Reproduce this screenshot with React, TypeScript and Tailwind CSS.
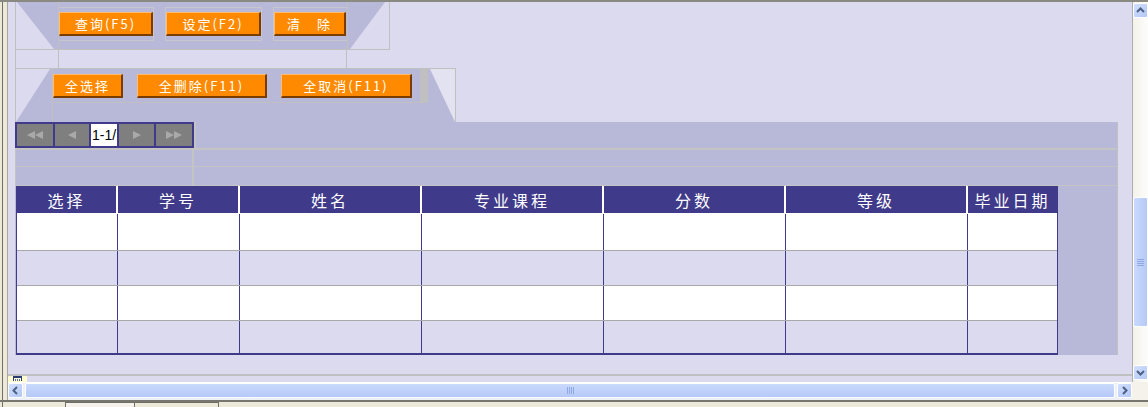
import React from 'react'

const heads = ['选择', '学号', '姓名', '专业课程', '分数', '等级', '毕业日期']
const colW = ['w-[101px]', 'w-[122px]', 'w-[182px]', 'w-[182px]', 'w-[182px]', 'w-[182px]', 'w-[89px]']
const rows = [
  'h-[36px] bg-white',
  'h-[35px] border-t border-[#a8a8a8] bg-[#dbdaee]',
  'h-[35px] border-t border-[#a8a8a8] bg-white',
  'h-[33px] border-t border-[#a8a8a8] bg-[#dbdaee]',
]

function OrangeBtn({ label, w }: { label: string; w: string }) {
  return (
    <div
      className={`${w} flex h-[24px] shrink-0 items-center justify-center border-t border-l border-t-[#ffbb70] border-l-[#ffbb70] border-r-2 border-b-2 border-r-[#7a3c00] border-b-[#7a3c00] bg-[#ff8a00] text-[13px] leading-none tracking-[2px] text-white`}
    >
      {label}
    </div>
  )
}

function PagerBtn({ w, d }: { w: string; d: string }) {
  return (
    <div className={`${w} flex h-full items-center justify-center bg-[#7f7f7f]`}>
      <svg width="18" height="8" viewBox="0 0 18 8">
        <path d={d} fill="#a9a9a9" />
      </svg>
    </div>
  )
}

function ScrollBtn({ d }: { d: string }) {
  return (
    <div className="flex h-[15px] w-[15px] shrink-0 items-center justify-center rounded-[2px] border border-white bg-gradient-to-br from-[#d3e0fe] to-[#b3c7f5]">
      <svg width="13" height="13" viewBox="0 0 13 13">
        <path d={d} fill="none" stroke="#4d6185" strokeWidth="2" />
      </svg>
    </div>
  )
}

function LeftEdge() {
  return (
    <div className="flex w-[8px] shrink-0">
      <div className="w-[2px] bg-[#ece9d8]" />
      <div className="w-px bg-[#6f6f68]" />
      <div className="w-[4px] bg-[#ece9d8]" />
      <div className="w-px bg-[#a9a8a0]" />
    </div>
  )
}

export default function App() {
  return (
    <div className="flex h-[407px] w-[1148px] flex-col overflow-hidden bg-[#ece9d8] font-['Noto_Sans_CJK_SC','Noto_Sans',sans-serif]">
      <div className="h-[2px] shrink-0 bg-[#8a8a82]" />

      <div className="flex h-[380px] shrink-0">
        <LeftEdge />

        {/* page body */}
        <div className="flex w-[1124px] flex-col bg-[#dbdaee] pl-[7px]">
          {/* query buttons */}
          <div className="flex w-[375px] flex-col">
            <div className="flex h-[48px] border-b border-[#c0c0c0]">
              <div className="w-[43px] border-l border-[#c0c0c0]">
                <svg className="block h-full w-full" viewBox="0 0 42 47" preserveAspectRatio="none">
                  <polygon points="1,0 42,0 42,47 38,47" fill="#b8b8d8" />
                </svg>
              </div>
              <div className="flex w-[289px] items-start gap-[11px] border-l border-[#c0c0c0] bg-[#b8b8d8] pt-[5px]">
                <div className="flex h-[34px] w-[95px] items-center justify-start border border-l-0 border-[#c6c6cc]">
                  <OrangeBtn label="查询(F5)" w="w-[94px]" />
                </div>
                <div className="flex h-[34px] w-[97px] items-center justify-center border border-[#c6c6cc]">
                  <OrangeBtn label="设定(F2)" w="w-[95px]" />
                </div>
                <div className="flex h-[34px] w-[74px] items-center justify-start border border-r-0 border-[#c6c6cc]">
                  <OrangeBtn label="清　除" w="w-[72px]" />
                </div>
              </div>
              <div className="w-[43px] border-x border-[#c0c0c0]">
                <svg className="block h-full w-full" viewBox="0 0 41 47" preserveAspectRatio="none">
                  <polygon points="0,0 37,0 2,47 0,47" fill="#b8b8d8" />
                </svg>
              </div>
            </div>
            <div className="flex h-[18px]">
              <div className="w-[43px] border-l border-[#c0c0c0]" />
              <div className="w-[289px] border-x border-[#c0c0c0]" />
            </div>
          </div>

          {/* select buttons */}
          <div className="flex h-[54px] w-[441px] border-t border-[#c0c0c0]">
            <div className="w-[37px] border-l border-[#c0c0c0]">
              <svg className="block h-full w-full" viewBox="0 0 36 53" preserveAspectRatio="none">
                <polygon points="34,0 36,0 36,53 0,53" fill="#b8b8d8" />
              </svg>
            </div>
            <div className="flex w-[376px] flex-col border-l border-[#c0c0c0] bg-[#b8b8d8]">
              <div className="flex h-[34px] border-b border-[#c0c0c0]">
                <div className="flex gap-[14px] pt-[5px]">
                  <OrangeBtn label="全选择" w="w-[70px]" />
                  <OrangeBtn label="全删除(F11)" w="w-[130px]" />
                  <OrangeBtn label="全取消(F11)" w="w-[131px]" />
                </div>
                <div className="ml-auto w-[8px] bg-[#c0c0c0]" />
              </div>
            </div>
            <div className="w-[28px] border-r border-[#c0c0c0] bg-[#e3e2f1]">
              <svg className="block h-full w-full" viewBox="0 0 27 53" preserveAspectRatio="none">
                <polygon points="0,0 2,0 27,53 0,53" fill="#b8b8d8" />
              </svg>
            </div>
          </div>

          {/* list area */}
          <div className="flex h-[233px] w-[1103px] flex-col border-r border-[#c0c0c0] bg-[#b8b8d8]">
            <div className="flex h-[26px]">
              <div className="flex h-full w-[179px] gap-[2px] border-2 border-[#3f3a89] bg-[#3f3a89]">
                <PagerBtn w="w-[36px]" d="M1 4 L9 0 V8 Z M9 4 L17 0 V8 Z" />
                <PagerBtn w="w-[34px]" d="M5 4 L13 0 V8 Z" />
                <div className="flex w-[26px] items-center overflow-hidden bg-white pl-px font-['Liberation_Sans',sans-serif] text-[14px] leading-none text-black">
                  1-1/
                </div>
                <PagerBtn w="w-[35px]" d="M5 0 L13 4 L5 8 Z" />
                <PagerBtn w="w-[36px]" d="M1 0 L9 4 L1 8 Z M9 0 L17 4 L9 8 Z" />
              </div>
              <div className="flex-1 border-l-2 border-[#c4c4c4]" />
            </div>
            <div className="h-[2px] bg-[#c4c4c4]" />
            <div className="flex h-[16px] border-l border-[#c4c4c4]">
              <div className="w-[178px] border-r-2 border-[#c4c4c4]" />
            </div>
            <div className="h-px bg-[#c4c4c4]" />
            <div className="flex h-[18px] border-l border-[#c4c4c4]">
              <div className="w-[178px] border-r-2 border-[#c4c4c4]" />
            </div>
            <div className="h-px bg-[#c4c4c4]" />

            {/* grid */}
            <div className="ml-px flex h-[169px] w-[1042px] flex-col border-x border-b-2 border-[#3f3a89]">
              <div className="flex h-[28px] border-b border-white bg-[#3f3a89] text-[16px] leading-none tracking-[3px] text-white">
                {heads.map((h, i) => (
                  <div
                    key={h}
                    className={`${colW[i]} flex items-center justify-center ${i < 6 ? 'border-r-2 border-white' : ''}`}
                  >
                    {h}
                  </div>
                ))}
              </div>
              {rows.map((r, ri) => (
                <div key={ri} className={`flex ${r}`}>
                  {colW.map((w, i) => (
                    <div key={i} className={`${w} ${i < 6 ? 'border-r border-[#3f3a89]' : ''}`} />
                  ))}
                </div>
              ))}
            </div>
          </div>

          <div className="h-[19px]" />
          <div className="-ml-[7px] h-[2px] bg-[#c0c0c0]" />
          <div className="-ml-[7px] flex h-[6px]">
            <div className="flex w-[19px] justify-center bg-[#fffbd2]">
              <svg width="11" height="6" viewBox="0 0 11 6">
                <rect x="1" y="0" width="9" height="2" fill="#283c78" />
                <rect x="1" y="2" width="1" height="3" fill="#283c78" />
                <rect x="9" y="2" width="1" height="3" fill="#283c78" />
                <rect x="3" y="3" width="1" height="2" fill="#5a6e9e" />
                <rect x="5" y="3" width="1" height="2" fill="#5a6e9e" />
                <rect x="7" y="3" width="1" height="2" fill="#5a6e9e" />
              </svg>
            </div>
          </div>
        </div>

        <div className="w-px bg-[#aeaeae]" />

        {/* vertical scrollbar */}
        <div className="flex w-[15px] flex-col bg-gradient-to-r from-[#f3f1ea] to-[#fdfdfb] pt-px">
          <ScrollBtn d="M3 8 L6.5 4.5 L10 8" />
          <div className="mt-[179px] flex h-[130px] items-center justify-center rounded-[2px] border border-white bg-gradient-to-r from-[#cadafd] to-[#b5c9f6]">
            <div className="flex flex-col gap-px">
              <div className="h-px w-[7px] bg-[#8fa8e3]" />
              <div className="h-px w-[7px] bg-[#8fa8e3]" />
              <div className="h-px w-[7px] bg-[#8fa8e3]" />
              <div className="h-px w-[7px] bg-[#8fa8e3]" />
            </div>
          </div>
          <div className="mt-[38px]">
            <ScrollBtn d="M3 5 L6.5 8.5 L10 5" />
          </div>
        </div>
      </div>

      {/* horizontal scrollbar */}
      <div className="flex h-[18px] shrink-0">
        <LeftEdge />
        <div className="flex w-[1124px] gap-[2px] border-t border-white bg-[#eef0f8] pb-[2px]">
          <ScrollBtn d="M8 3 L4.5 6.5 L8 10" />
          <div className="flex h-[15px] flex-1 items-center justify-center rounded-[2px] border border-white bg-gradient-to-b from-[#cadafd] to-[#b5c9f6]">
            <div className="flex gap-px">
              <div className="h-[7px] w-px bg-[#8fa8e3]" />
              <div className="h-[7px] w-px bg-[#8fa8e3]" />
              <div className="h-[7px] w-px bg-[#8fa8e3]" />
              <div className="h-[7px] w-px bg-[#8fa8e3]" />
            </div>
          </div>
          <ScrollBtn d="M5 3 L8.5 6.5 L5 10" />
        </div>
        <div className="flex-1 bg-[#f4f2ea]" />
      </div>
      <div className="h-[2px] shrink-0 bg-[#77776f]" />

      {/* sheet tabs */}
      <div className="flex h-[5px] shrink-0">
        <div className="flex w-[8px]">
          <div className="w-[2px]" />
          <div className="w-px bg-[#6f6f68]" />
        </div>
        <div className="ml-[57px] w-[70px] border-x border-t border-[#6f6f68] bg-[#f4f2ea]" />
        <div className="w-[84px] border-r border-t border-[#6f6f68]" />
      </div>
    </div>
  )
}
